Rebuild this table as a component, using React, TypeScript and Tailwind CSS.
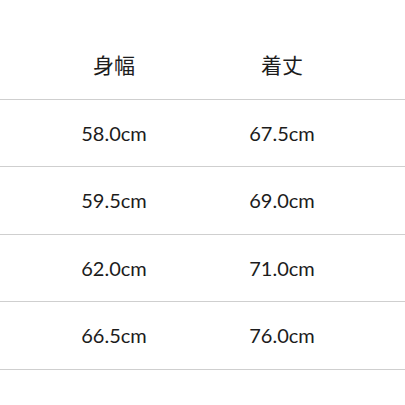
const ROWS = [
  ['58.0cm', '67.5cm'],
  ['59.5cm', '69.0cm'],
  ['62.0cm', '71.0cm'],
  ['66.5cm', '76.0cm'],
];

export default function App() {
  return (
    <div
      className="h-[405px] w-[405px] overflow-hidden bg-white pt-[32px] text-[#1c1c1c]"
      style={{ fontFamily: 'Lato, "Noto Sans CJK JP", sans-serif' }}
    >
      <div className="grid h-[67.5px] grid-cols-[30px_168px_168px_1fr] items-center border-b border-[#cfcfcf] pb-[2px] text-[21px]">
        <div />
        <div className="text-center">身幅</div>
        <div className="text-center">着丈</div>
        <div />
      </div>
      {ROWS.map(r => (
        <div
          key={r[0]}
          className="grid h-[67.5px] grid-cols-[30px_168px_168px_1fr] items-center border-b border-[#cfcfcf] text-[20px]"
        >
          <div />
          <div className="text-center">{r[0]}</div>
          <div className="text-center">{r[1]}</div>
          <div />
        </div>
      ))}
    </div>
  );
}
